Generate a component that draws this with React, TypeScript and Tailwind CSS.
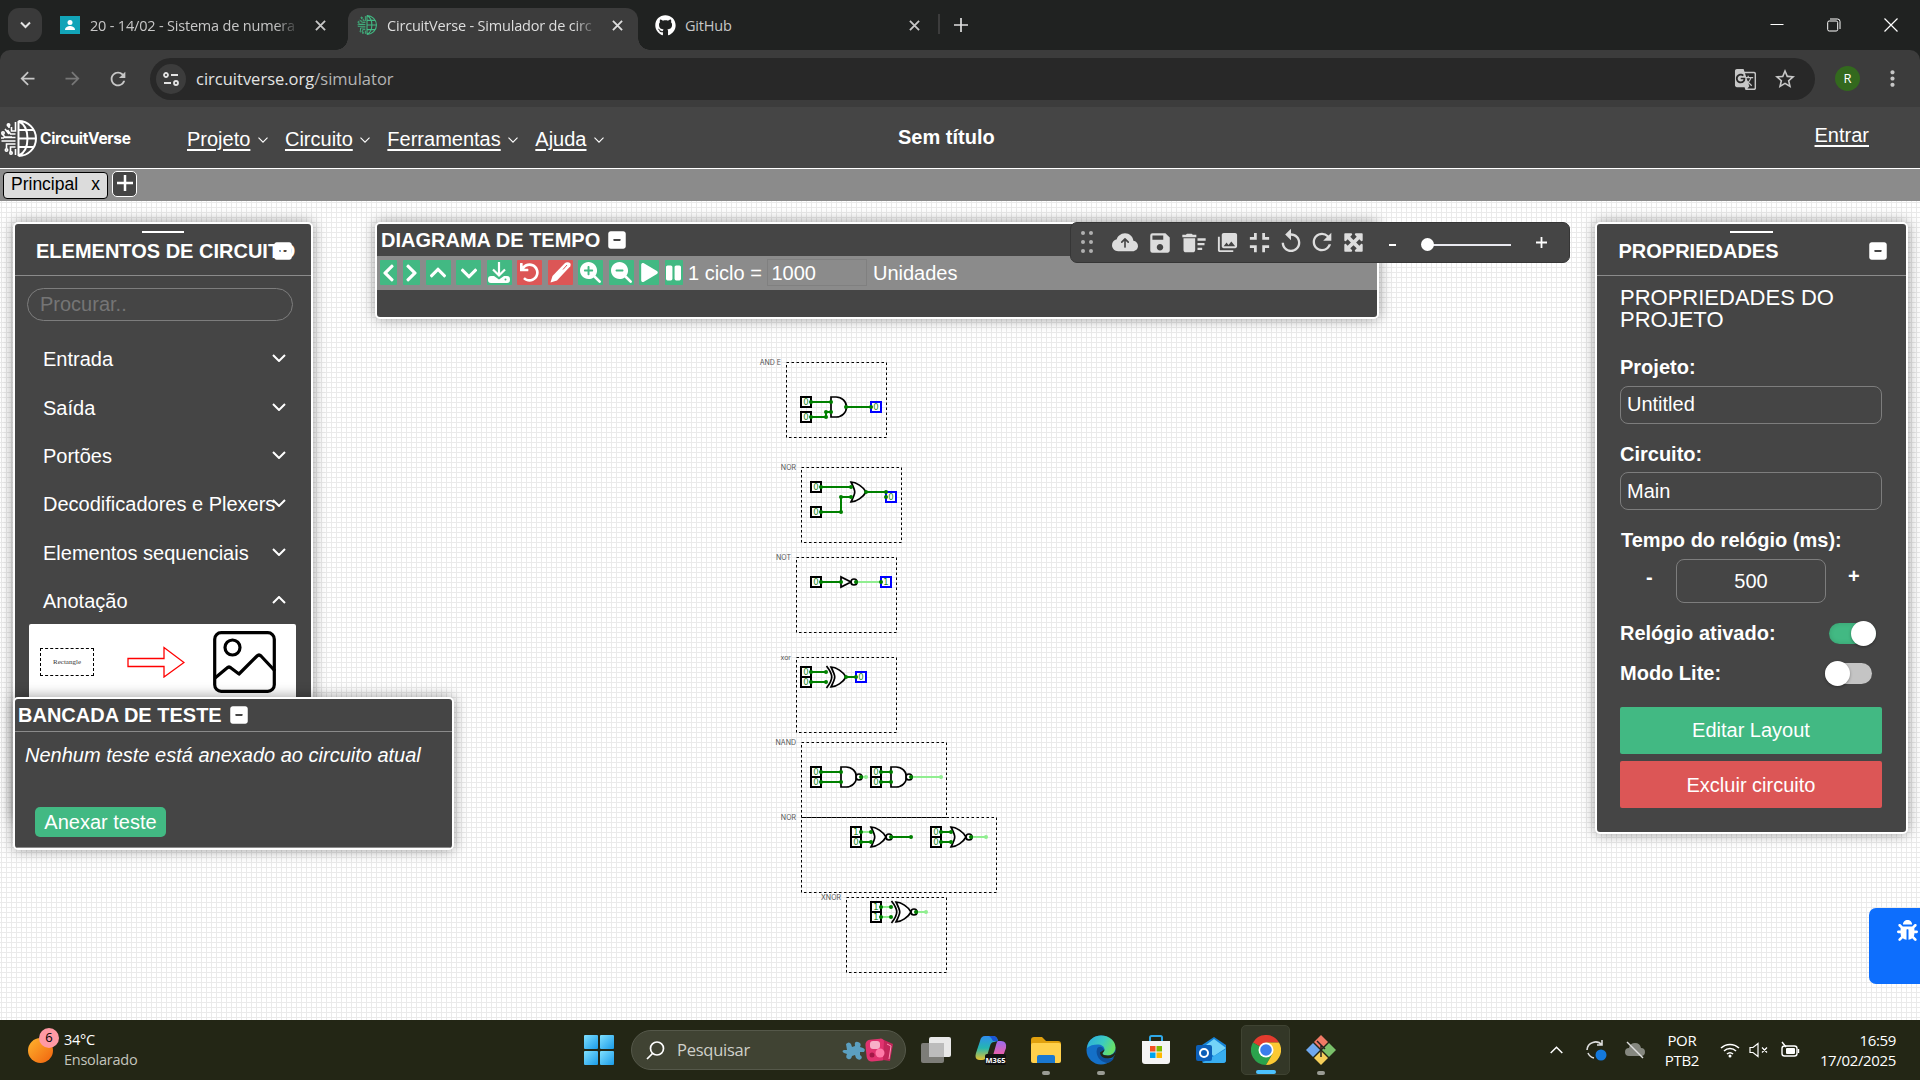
import React from "react";
import { FaGithub, FaPlay, FaPause, FaUndo, FaChevronLeft, FaChevronRight, FaChevronUp, FaChevronDown, FaBug } from "react-icons/fa";
import { FaSquareMinus, FaMaximize, FaMagnifyingGlassPlus, FaMagnifyingGlassMinus } from "react-icons/fa6";
import { BsCloudArrowUpFill } from "react-icons/bs";
import { MdSave, MdDeleteSweep, MdPhotoLibrary, MdFullscreenExit, MdReplay, MdRefresh, MdStarBorder, MdGTranslate, MdMoreVert, MdArrowBack, MdArrowForward } from "react-icons/md";

const ARIAL = "font-['Liberation_Sans',Arial,sans-serif]";
const SEGOE = "font-['Open_Sans',sans-serif]";
const PANEL =
  "absolute rounded-[5px] border-2 border-white bg-[#454545] text-white shadow-[0_0_14px_rgba(0,0,0,0.4)] overflow-hidden";

/* ---------- Browser chrome ---------- */

function TabClose({ className = "" }: { className?: string }) {
  return (
    <svg className={`h-[11px] w-[11px] shrink-0 ${className}`} viewBox="0 0 12 12" fill="none" stroke="currentColor" strokeWidth="2">
      <path d="M1 1l10 10M11 1L1 11" />
    </svg>
  );
}

function GlobeMark({ color, className }: { color: string; className: string }) {
  return (
    <svg className={className} viewBox="0 0 37 37" fill="none" stroke={color} strokeWidth="1.6">
      <path d="M18.500 1v35M18.500 1a17.500 17.500 0 0 1 0 35M18.500 1c6 3 9 10 9 17.500s-3 14.500-9 17.500M18.500 10h15M18.500 18.500h17.500M18.500 27h15" strokeWidth="2" />
      <path d="M15.500 2v9h-4v-4M12 17h-7l-3-3M15.500 14h-5l-3-4M15.500 17.500h-12M15.500 21h-14M15.500 24h-9v4M15.500 27h-5v5M15.500 35v-6M9 4v4M5 9l4 5M1 18h3" />
      <circle cx="8.500" cy="5" r="1.200" />
      <circle cx="3" cy="13" r="1.200" />
      <circle cx="6.500" cy="30" r="1.200" />
      <circle cx="11" cy="33" r="1.200" />
    </svg>
  );
}

function TabStrip() {
  return (
    <div className="flex h-[50px] bg-[#202221] text-[#c7c7c7]">
      <div className="mt-[8px] ml-[8px] flex h-[34px] w-[34px] items-center justify-center rounded-[11px] bg-[#3a3a3a]">
        <svg className="h-[8px] w-[11px]" viewBox="0 0 11 8" fill="none" stroke="#e3e3e3" strokeWidth="2">
          <path d="M1 1.500l4.500 4.500L10 1.500" />
        </svg>
      </div>
      <div className="ml-[18px] flex w-[288px] items-center">
        <span className="flex h-[18px] w-[20px] items-center justify-center bg-[#12a4b8]">
          <svg className="h-[12px] w-[12px]" viewBox="0 0 12 12" fill="#fff">
            <circle cx="6" cy="3.500" r="2.500" />
            <path d="M1 11c0-3 3-4 5-4s5 1 5 4z" />
          </svg>
        </span>
        <span className="mt-[1px] ml-[10px] w-[210px] text-[14.500px] tracking-[-0.190px] whitespace-nowrap [mask-image:linear-gradient(90deg,#000_88%,transparent)]">
          20 - 14/02 - Sistema de numera
        </span>
        <TabClose className="ml-[15px]" />
      </div>
      <div className="relative mt-[8px] flex h-[42px] w-[290px] items-center rounded-t-[12px] bg-[#3c3c3c] pb-[8px] pl-[9px] text-[#dedede]">
        <span className="absolute bottom-0 left-[-12px] h-[12px] w-[12px] bg-[radial-gradient(circle_at_0_0,transparent_11.500px,#3c3c3c_12px)]" />
        <span className="absolute right-[-12px] bottom-0 h-[12px] w-[12px] bg-[radial-gradient(circle_at_100%_0,transparent_11.500px,#3c3c3c_12px)]" />
        <GlobeMark color="#42b983" className="h-[20px] w-[20px]" />
        <span className="mt-[1px] ml-[10px] w-[212px] text-[14.500px] tracking-[-0.190px] whitespace-nowrap [mask-image:linear-gradient(90deg,#000_88%,transparent)]">
          CircuitVerse - Simulador de circ
        </span>
        <TabClose className="ml-[13px]" />
      </div>
      <div className="ml-[17px] flex w-[265px] items-center">
        <FaGithub className="h-[21px] w-[21px] text-white" />
        <span className="mt-[1px] ml-[9px] w-[225px] text-[14.500px] tracking-[-0.190px]">GitHub</span>
        <TabClose />
      </div>
      <div className="mt-[14px] ml-[18px] h-[20px] w-[2px] bg-[#3c3c3c]" />
      <svg className="mt-[18px] ml-[14px] h-[14px] w-[14px]" viewBox="0 0 14 14" stroke="#dedede" strokeWidth="1.700">
        <path d="M7 0v14M0 7h14" />
      </svg>
      <div className="mr-[22px] ml-auto flex items-center gap-[43px] pb-[1px]">
        <svg className="h-[14px] w-[14px]" viewBox="0 0 14 14" stroke="#fff">
          <path d="M0.500 6.500h13" />
        </svg>
        <svg className="h-[14px] w-[14px]" viewBox="0 0 14 14" fill="none" stroke="#fff">
          <rect x="0.700" y="3" width="10" height="10" rx="1.500" />
          <path d="M3 1h7.500a2.500 2.500 0 0 1 2.500 2.500V11" />
        </svg>
        <svg className="h-[14px] w-[14px]" viewBox="0 0 14 14" stroke="#fff" strokeWidth="1.200">
          <path d="M0.500 0.500l13 13M13.500 0.500l-13 13" />
        </svg>
      </div>
    </div>
  );
}

function AddressBar() {
  return (
    <div className="bg-[#202221]">
      <div className="flex h-[57px] items-center rounded-t-[10px] bg-[#3c3c3c] text-[#c7c7c7]">
        <MdArrowBack className="ml-[17px] h-[21px] w-[21px]" />
        <MdArrowForward className="ml-[24px] h-[21px] w-[21px] text-[#777]" />
        <MdRefresh className="ml-[24px] h-[22px] w-[22px]" />
        <div className="mt-[1px] ml-[21px] flex h-[42px] w-[1665px] items-center rounded-full bg-[#282828] pl-[6px]">
          <span className="flex h-[30px] w-[30px] items-center justify-center rounded-full bg-[#3c3c3c]">
            <svg className="h-[14px] w-[16px]" viewBox="0 0 16 14" fill="none" stroke="#e3e3e3" strokeWidth="1.800">
              <circle cx="3" cy="3" r="2" />
              <path d="M8 3h7M1 11h7" />
              <circle cx="13" cy="11" r="2" />
            </svg>
          </span>
          <span className="mt-[1px] ml-[10px] text-[16.500px] tracking-[0px] text-[#e3e3e3]">
            circuitverse.org<span className="text-[#b5b5b5]">/simulator</span>
          </span>
          <MdGTranslate className="ml-auto h-[23px] w-[23px]" />
          <MdStarBorder className="mr-[18px] ml-[16px] h-[24px] w-[24px]" />
        </div>
        <span className="ml-[20px] flex h-[25px] w-[25px] items-center justify-center rounded-full bg-[#33691e] text-[13px] text-white">R</span>
        <MdMoreVert className="ml-[20px] h-[25px] w-[25px]" />
      </div>
    </div>
  );
}

/* ---------- Simulator navigation ---------- */

function MenuItem({ label }: { label: string }) {
  return (
    <span className="flex items-center">
      <span className="underline decoration-[1.500px] underline-offset-[2.500px]">{label}</span>
      <svg className="mt-[2px] ml-[7.500px] h-[6px] w-[10px]" viewBox="0 0 10 6" fill="none" stroke="#fff" strokeWidth="1.100">
        <path d="M0.500 0.700L5 5.200L9.500 0.700" />
      </svg>
    </span>
  );
}

function NavBar() {
  return (
    <nav className={`relative flex h-[62px] items-start border-b border-white bg-[#454545] text-[20px] leading-[24px] text-white ${ARIAL}`}>
      <div className="flex w-[187px] items-center pt-[13px]">
        <GlobeMark color="#fff" className="h-[37px] w-[37px]" />
        <span className="ml-[3px] font-['Inter',sans-serif] text-[15.500px] font-bold tracking-[-0.300px]">CircuitVerse</span>
      </div>
      <div className="flex gap-[17.100px] pt-[20px]">
        <MenuItem label="Projeto" />
        <MenuItem label="Circuito" />
        <MenuItem label="Ferramentas" />
        <MenuItem label="Ajuda" />
      </div>
      <span className="absolute top-[18px] left-[898px] font-bold">Sem título</span>
      <span className="mt-[16px] mr-[51px] ml-auto underline decoration-[1.500px] underline-offset-[2.500px]">Entrar</span>
    </nav>
  );
}

function CircuitTabs() {
  return (
    <div className={`flex h-[32px] bg-[#8b8b8b] ${ARIAL}`}>
      <div className="mt-[3px] ml-[3px] flex h-[27px] w-[105px] justify-between rounded-[4px] border border-black bg-[#dcdcdc] pr-[7px] pl-[7px] text-[17.500px] leading-[23px] text-black">
        <span>Principal</span>
        <span>x</span>
      </div>
      <div className="mt-[2px] ml-[4px] flex h-[26px] w-[25px] items-center justify-center rounded-[5px] border border-white bg-[#454545]">
        <svg className="mb-[3px] h-[16px] w-[16px]" viewBox="0 0 16 16" stroke="#fff" strokeWidth="2.500">
          <path d="M8 0v16M0 8h16" />
        </svg>
      </div>
    </div>
  );
}

/* ---------- Circuit drawing ---------- */

const GREEN = "#008000";
const LIGHT = "#90ee90";

function Frame({ x, y, w, label }: { x: number; y: number; w: number; label: string }) {
  return (
    <g>
      <rect x={x + 0.5} y={y + 0.5} width={w} height={75} fill="none" stroke="#000" strokeDasharray="2.5 2.5" />
      <text x={x - 5} y={y + 3} textAnchor="end" fontSize="7" fill="#555" fontFamily="Inter, sans-serif">
        {label}
      </text>
    </g>
  );
}

function Pin({ x, y, v, out = false }: { x: number; y: number; v: number; out?: boolean }) {
  return (
    <g>
      <rect x={x - 5} y={y - 5} width={10} height={10} fill="#fff" stroke={out ? "#0000ff" : "#000"} strokeWidth="2" />
      <text x={x} y={y + 3.100} textAnchor="middle" fontSize="8.500" fill="#1f8c1f" fontFamily="DejaVu Sans, sans-serif">
        {v}
      </text>
    </g>
  );
}

function Wire({ d, light = false }: { d: string; light?: boolean }) {
  return <path d={d} fill="none" stroke={light ? LIGHT : GREEN} strokeWidth="2" />;
}

function Dots({ at, light = false }: { at: number[][]; light?: boolean }) {
  return (
    <>
      {at.map(([x, y]) => (
        <circle key={`${x}-${y}`} cx={x} cy={y} r="2" fill={light ? LIGHT : GREEN} />
      ))}
    </>
  );
}

function And({ x, y }: { x: number; y: number }) {
  return <path transform={`translate(${x} ${y})`} d="M-5 -10h5a10.500 10 0 0 1 0 20h-5z" fill="#fff" stroke="#000" strokeWidth="1.700" />;
}

function Or({ x, y, x2 = false }: { x: number; y: number; x2?: boolean }) {
  return (
    <g transform={`translate(${x} ${y})`} stroke="#000" strokeWidth="1.700">
      <path d="M-5 -10C0 -10 7.500 -5 10 0C7.500 5 0 10 -5 10C0 0 0 0 -5 -10z" fill="#fff" />
      {x2 && <path d="M-9.500 -11C-2.500 -2 -2.500 2 -9.500 11" fill="none" />}
    </g>
  );
}

function Bubble({ x, y }: { x: number; y: number }) {
  return <circle cx={x} cy={y} r="3" fill="#fff" stroke="#000" strokeWidth="1.700" />;
}

function Circuit() {
  return (
    <svg className="block h-full w-full" viewBox="0 201 1920 819">
      <defs>
        <pattern id="grid" x="1" y="2" width="5" height="5" patternUnits="userSpaceOnUse">
          <path d="M0 0.500h5M0.500 0v5" stroke="#eaeaea" strokeWidth="1" />
        </pattern>
      </defs>
      <rect y="201" width="1920" height="819" fill="#fff" />
      <rect y="201" width="1920" height="819" fill="url(#grid)" />

      <Frame x={786} y={362} w={100} label="AND E" />
      <Frame x={801} y={467} w={100} label="NOR" />
      <Frame x={796} y={557} w={100} label="NOT" />
      <Frame x={796} y={657} w={100} label="xor" />
      <Frame x={801} y={742} w={145} label="NAND" />
      <Frame x={801} y={817} w={195} label="NOR" />
      <Frame x={846} y={897} w={100} label="XNOR" />

      <Wire d="M811 402h20M811 417h15v-5h5M846 407h25" />
      <Pin x={806} y={402} v={0} />
      <Pin x={806} y={417} v={0} />
      <Pin x={876} y={407} v={0} out />
      <And x={836} y={407} />
      <Dots at={[[811, 402], [831, 402], [811, 417], [826, 417], [826, 412], [831, 412], [846, 407], [871, 407]]} />

      <Wire d="M821 487h30M821 512h20v-15h10M866 492h20v5" />
      <Pin x={816} y={487} v={0} />
      <Pin x={816} y={512} v={0} />
      <Pin x={891} y={497} v={0} out />
      <Or x={856} y={492} />
      <Dots at={[[821, 487], [851, 487], [821, 512], [841, 512], [841, 497], [851, 497], [866, 492], [886, 492], [886, 497]]} />

      <Wire d="M821 582h20" />
      <Wire d="M856 582h25" light />
      <Pin x={816} y={582} v={0} />
      <Pin x={886} y={582} v={1} out />
      <path d="M841 577v10l10 -5z" fill="#fff" stroke="#000" strokeWidth="1.700" />
      <Bubble x={854} y={582} />
      <Dots at={[[821, 582], [841, 582], [856, 582], [881, 582]]} />

      <Wire d="M811 672h15M811 682h15M846 677h10" />
      <Pin x={806} y={672} v={0} />
      <Pin x={806} y={682} v={0} />
      <Pin x={861} y={677} v={0} out />
      <Or x={836} y={677} x2 />
      <Dots at={[[811, 672], [826, 672], [811, 682], [826, 682], [846, 677], [856, 677]]} />

      <Wire d="M821 772h20M821 782h20M881 772h10M881 782h10" />
      <Wire d="M861 777h5M911 777h30" light />
      <Pin x={816} y={772} v={0} />
      <Pin x={816} y={782} v={0} />
      <Pin x={876} y={772} v={0} />
      <Pin x={876} y={782} v={0} />
      <And x={846} y={777} />
      <And x={896} y={777} />
      <Bubble x={859} y={777} />
      <Bubble x={909} y={777} />
      <Dots at={[[821, 772], [841, 772], [821, 782], [841, 782], [861, 777], [881, 772], [891, 772], [881, 782], [891, 782], [911, 777]]} />
      <Dots at={[[866, 777], [941, 777]]} light />

      <Wire d="M861 832h10M971 837h15" light />
      <Wire d="M861 842h10M891 837h20M941 832h10M941 842h10" />
      <Pin x={856} y={832} v={1} />
      <Pin x={856} y={842} v={0} />
      <Pin x={936} y={832} v={0} />
      <Pin x={936} y={842} v={0} />
      <Or x={876} y={837} />
      <Or x={956} y={837} />
      <Bubble x={889} y={837} />
      <Bubble x={969} y={837} />
      <Dots at={[[861, 832], [871, 832], [861, 842], [871, 842], [891, 837], [911, 837], [941, 832], [951, 832], [941, 842], [951, 842], [971, 837]]} />
      <Dots at={[[986, 837]]} light />

      <Wire d="M881 907h10M881 917h10M916 912h10" light />
      <Pin x={876} y={907} v={1} />
      <Pin x={876} y={917} v={1} />
      <Or x={901} y={912} x2 />
      <Bubble x={914} y={912} />
      <Dots at={[[881, 907], [891, 907], [881, 917], [891, 917], [916, 912]]} />
      <Dots at={[[926, 912]]} light />
    </svg>
  );
}

/* ---------- Floating panels ---------- */

function Angle({ up = false }: { up?: boolean }) {
  return (
    <svg className={up ? "h-[8px] w-[14px] rotate-180" : "h-[8px] w-[14px]"} viewBox="0 0 14 8" fill="none" stroke="#fff" strokeWidth="2">
      <path d="M1 1l6 6l6 -6" />
    </svg>
  );
}

function ElementsPanel() {
  const groups = ["Entrada", "Saída", "Portões", "Decodificadores e Plexers", "Elementos sequenciais", "Anotação"];
  return (
    <section className={`${PANEL} top-[21px] left-[13px] h-[600px] w-[300px]`}>
      <div className="relative flex h-[52px] items-center border-b border-[#8b8b8b] pt-[3px] pl-[21px] text-[20px] font-bold whitespace-nowrap">
        <span className="absolute top-[7px] left-[127px] h-[2px] w-[42px] bg-white" />
        ELEMENTOS DE CIRCUITO
        <FaSquareMinus className="absolute top-[17px] left-[259px] h-[20px] w-[18px]" />
      </div>
      <div className="mx-[12px] mt-[12px] flex h-[33px] w-[266px] items-center rounded-full border border-[#7d7d7d] pb-[1px] pl-[12px] text-[20px] text-[#757575]">
        Procurar..
      </div>
      <div className="mt-[14px] text-[20px]">
        {groups.map((g) => (
          <div key={g} className="relative flex h-[48.400px] items-center pl-[28px] whitespace-nowrap">
            {g}
            <span className="absolute right-[25.500px] mb-[2px]">
              <Angle up={g === "Anotação"} />
            </span>
          </div>
        ))}
      </div>
      <div className="mt-[-1px] ml-[14px] flex h-[80px] w-[267px] items-start rounded-t-[2px] bg-white">
        <div className="mt-[24px] ml-[11px] flex h-[28px] w-[54px] items-center justify-center border border-dashed border-black font-['Liberation_Serif',serif] text-[7px] text-[#333]">
          Rectangle
        </div>
        <svg className="mt-[22px] ml-[33px] h-[32px] w-[58px]" viewBox="0 0 58 32" fill="none" stroke="#f00" strokeWidth="1.300">
          <path d="M1 12.500h36V1.500L57 16.500L37 31V20.500H1z" />
        </svg>
        <svg className="mt-[7px] ml-[28px] h-[62px] w-[63px]" viewBox="0 0 63 62" fill="none" stroke="#000" strokeWidth="3.200">
          <rect x="1.700" y="1.700" width="59.600" height="58.600" rx="6.500" />
          <circle cx="19.500" cy="16.500" r="7.500" />
          <path d="M2 47l12-10q2-2 4 0l8 6l18-18q2-2 4 0l14 15" strokeLinejoin="round" />
        </svg>
      </div>
    </section>
  );
}

function TestPanel() {
  return (
    <section className={`${PANEL} top-[496px] left-[13px] h-[153px] w-[441px]`}>
      <div className="flex h-[33px] items-center gap-[8px] border-b border-[#8b8b8b] pb-[1px] pl-[3px] text-[20px] font-bold">
        BANCADA DE TESTE
        <FaSquareMinus className="h-[20px] w-[18px]" />
      </div>
      <div className="mt-[11px] ml-[10px] text-[20px] leading-[24px] italic">Nenhum teste está anexado ao circuito atual</div>
      <div className="mt-[40px] ml-[20px] flex h-[30px] w-[131px] items-center justify-center rounded-[5px] bg-[#42b983] text-[20px]">Anexar teste</div>
      <div className="mt-[10px] h-px bg-[#8b8b8b]" />
    </section>
  );
}

function TimingButton({ w, red = false, children }: { w: string; red?: boolean; children: React.ReactNode }) {
  return <span className={`flex h-[25px] shrink-0 items-center justify-center rounded-[1px] ${w} ${red ? "bg-[#dc5656]" : "bg-[#42b983]"}`}>{children}</span>;
}

function TimingPanel() {
  return (
    <section className={`${PANEL} top-[21px] left-[375px] h-[97px] w-[1004px]`}>
      <div className="flex h-[32px] items-center gap-[8px] pb-[1px] pl-[4px] text-[20px] font-bold">
        DIAGRAMA DE TEMPO
        <FaSquareMinus className="h-[20px] w-[18px]" />
      </div>
      <div className="flex h-[34px] items-center gap-[5.500px] bg-[#8b8b8b] pb-[1px] pl-[2.500px] text-[20px]">
        <TimingButton w="w-[17.500px]"><FaChevronLeft className="h-[20px] w-[13px]" /></TimingButton>
        <TimingButton w="w-[17.500px]"><FaChevronRight className="h-[20px] w-[13px]" /></TimingButton>
        <TimingButton w="w-[25px]"><FaChevronUp className="h-[19px] w-[20px]" /></TimingButton>
        <TimingButton w="w-[25px]"><FaChevronDown className="mt-[2px] h-[19px] w-[20px]" /></TimingButton>
        <TimingButton w="w-[25px]">
          <svg className="h-[21px] w-[22px]" viewBox="0 0 22 21" fill="none" stroke="#fff" strokeWidth="2.200">
            <path d="M11 0v13M5 7.500l6 6l6-6" />
            <path d="M0 17q0-3 3-3h3l5 3.500l5-3.500h3q3 0 3 3v1q0 3-3 3H3q-3 0-3-3z" fill="#fff" stroke="none" />
            <circle cx="17.500" cy="17.500" r="1" fill="#42b983" stroke="none" />
          </svg>
        </TimingButton>
        <TimingButton w="w-[25px]" red><FaUndo className="h-[19px] w-[19px]" /></TimingButton>
        <TimingButton w="w-[25px]" red>
          <svg className="h-[21px] w-[21px]" viewBox="0 0 21 21">
            <path d="M0.500 20.500l2-6.500L14.500 1.500q2-1.800 4.500-1t1.300 3.700L7 18.500z" fill="#fff" />
            <path d="M13 7.500l4-4.500" stroke="#dc5656" strokeWidth="1" />
          </svg>
        </TimingButton>
        <TimingButton w="w-[25px]"><FaMagnifyingGlassPlus className="h-[21px] w-[21px]" /></TimingButton>
        <TimingButton w="w-[25px]"><FaMagnifyingGlassMinus className="h-[21px] w-[21px]" /></TimingButton>
        <TimingButton w="w-[20px]"><FaPlay className="h-[19px] w-[17px]" /></TimingButton>
        <TimingButton w="w-[18px]">
          <FaPause className="h-[18px] w-[15px]" />
        </TimingButton>
        <span className="whitespace-nowrap">1 ciclo =</span>
        <span className="flex h-[27px] w-[100px] items-center border border-[#808080] pl-[3px]">1000</span>
        <span>Unidades</span>
      </div>
    </section>
  );
}

function QuickToolbar() {
  return (
    <div className="absolute top-[21px] left-[1070px] flex h-[41px] w-[500px] items-center rounded-[7px] border border-[#363636] bg-[#454545] text-[#dddddd]">
      <div className="mb-[2px] ml-[10px] grid w-[12px] grid-cols-2 gap-x-[3px] gap-y-[5px]">
        {[0, 1, 2, 3, 4, 5].map((i) => (
          <span key={i} className="h-[4px] w-[4px] rounded-full bg-[#b0b0b0]" />
        ))}
      </div>
      <BsCloudArrowUpFill className="ml-[19px] h-[26px] w-[26px]" />
      <MdSave className="ml-[9px] h-[26px] w-[26px]" />
      <MdDeleteSweep className="ml-[7px] h-[30px] w-[28px]" />
      <MdPhotoLibrary className="ml-[8px] h-[23px] w-[23px]" />
      <MdFullscreenExit className="ml-[4px] h-[33px] w-[33px]" />
      <MdReplay className="mb-[2px] ml-[1px] h-[29px] w-[28px]" />
      <MdRefresh className="mb-[1px] ml-[3px] h-[28px] w-[28px]" />
      <FaMaximize className="mb-[1px] ml-[7px] h-[21px] w-[21px]" />
      <span className="mt-[4px] ml-[25px] h-[2px] w-[7px] bg-white" />
      <span className="relative mt-[5px] ml-[27px] h-[2px] w-[88px] bg-[#e9e9ef]">
        <span className="absolute top-[-6px] left-[-2px] h-[13px] w-[13px] rounded-full bg-white" />
      </span>
      <svg className="ml-[25px] h-[11px] w-[11px]" viewBox="0 0 11 11" stroke="#fff" strokeWidth="1.800">
        <path d="M5.500 0v11M0 5.500h11" />
      </svg>
    </div>
  );
}

function Toggle({ on }: { on: boolean }) {
  return (
    <span className="flex h-[25px] w-[51px] items-center">
      <span
        className={
          on
            ? "ml-[4px] flex h-[21px] w-[47px] items-center justify-end rounded-full bg-[#42b983] shadow-[inset_0_0_5px_rgba(0,0,0,0.15)]"
            : "flex h-[21px] w-[47px] items-center rounded-full bg-[#c4c4c4]"
        }
      >
        <span className="h-[25px] w-[25px] shrink-0 rounded-full bg-white shadow-[0_1px_3px_rgba(0,0,0,0.35)]" />
      </span>
    </span>
  );
}

function PropertiesPanel() {
  return (
    <section className={`${PANEL} top-[21px] left-[1595px] h-[612px] w-[313px] text-[20px] leading-[24px]`}>
      <div className="relative flex h-[52px] items-center justify-between border-b border-[#8b8b8b] pt-[3px] pr-[19px] pl-[21.500px] font-bold">
        <span className="absolute top-[7px] left-[133px] h-[2px] w-[43px] bg-white" />
        PROPRIEDADES
        <FaSquareMinus className="h-[20px] w-[18px]" />
      </div>
      <div className="flex flex-col pr-[24px] pl-[23px]">
        <h2 className="mt-[11px] text-[22px] leading-[22px]">PROPRIEDADES DO PROJETO</h2>
        <label className="mt-[24px] font-bold">Projeto:</label>
        <span className="mt-[7px] flex h-[38px] items-center rounded-[8px] border border-[#7d7d7d] pb-[2px] pl-[6px]">Untitled</span>
        <label className="mt-[18px] font-bold">Circuito:</label>
        <span className="mt-[6px] flex h-[38px] items-center rounded-[8px] border border-[#7d7d7d] pb-[1px] pl-[6px]">Main</span>
        <label className="mt-[18px] pl-[1px] font-bold">Tempo do relógio (ms):</label>
        <div className="mt-[7px] flex h-[44px] items-start font-bold">
          <span className="mt-[6px] ml-[26px] w-[30px]">-</span>
          <span className="flex h-[44px] w-[150px] items-center justify-center rounded-[8px] border border-[#7d7d7d] font-normal">500</span>
          <span className="mt-[5px] ml-[22px]">+</span>
        </div>
        <div className="mt-[18px] flex h-[25px] items-center justify-between pr-[6px] font-bold">
          <span className="mb-[1px]">Relógio ativado:</span>
          <Toggle on />
        </div>
        <div className="mt-[15px] flex h-[25px] items-center justify-between pr-[6px] font-bold">
          <span className="mb-[1px]">Modo Lite:</span>
          <Toggle on={false} />
        </div>
        <div className="mt-[21px] flex h-[47px] items-center justify-center rounded-[2px] bg-[#42b983] pb-[1px]">Editar Layout</div>
        <div className="mt-[7px] flex h-[47px] items-center justify-center rounded-[2px] bg-[#dc5656]">Excluir circuito</div>
      </div>
    </section>
  );
}

/* ---------- Windows taskbar ---------- */

function TaskIcon({ active = false, running = false, children }: { active?: boolean; running?: boolean; children: React.ReactNode }) {
  return (
    <span className={`relative flex h-[50px] w-[49px] items-center justify-center rounded-[5px] ${active ? "border border-[#3f4332] bg-[#333727]" : ""}`}>
      {children}
      {(active || running) && (
        <span className={`absolute bottom-0 left-1/2 h-[4px] -translate-x-1/2 rounded-full ${active ? "w-[20px] bg-[#4cc2ff]" : "w-[8px] bg-[#9a9c94]"}`} />
      )}
    </span>
  );
}

function Taskbar() {
  return (
    <footer className={`relative flex h-[60px] items-center bg-[#232615] text-white ${SEGOE}`}>
      <div className="relative ml-[28px] flex h-[60px] w-[545px] items-center">
        <span className="h-[25px] w-[25px] rounded-full bg-[linear-gradient(135deg,#ffb52e,#f0620e)]" />
        <span className="absolute top-[8px] left-[11px] flex h-[20px] w-[20px] items-center justify-center rounded-full bg-[#ff99a4] text-[13px] text-black">6</span>
        <span className="ml-[11px] flex flex-col text-[14.500px] leading-[20px] tracking-[-0.250px]">
          <span>34°C</span>
          <span className="text-[#c4c5bd]">Ensolarado</span>
        </span>
      </div>
      <span className="ml-[11px] grid h-[30px] w-[30px] grid-cols-2 gap-[1.500px]">
        {[0, 1, 2, 3].map((i) => (
          <span key={i} className="rounded-[1px] bg-[linear-gradient(135deg,#7fe0ff,#1a9be8)]" />
        ))}
      </span>
      <div className="ml-[17px] flex h-[40px] w-[275px] items-center rounded-full border border-[#55584a] bg-[#404333] pl-[14px]">
        <svg className="h-[19px] w-[19px]" viewBox="0 0 19 19" fill="none" stroke="#fff" strokeWidth="1.700">
          <circle cx="11" cy="7.500" r="6.500" />
          <path d="M6.500 12.500L1 18" />
        </svg>
        <span className="ml-[12px] text-[16.500px] tracking-[-0.250px] text-[#cfd0ca]">Pesquisar</span>
        <svg className="mr-[8px] ml-auto h-[30px] w-[56px]" viewBox="0 0 56 30">
          <path
            d="M5 9q3-3 5 0l1 3 3-1q-1-5 3-4t2 5l3 1q3 1 1 4l-4 0 0 3q3 2 1 4t-5-1l-1-3-3 1q-1 4-4 3t-1-5l-3-1q-3-2 0-3l3 0z"
            fill="#5b9fc0"
          />
          <rect x="25" y="4" width="20" height="22" rx="5" fill="#e0336f" transform="rotate(-6 36 15)" />
          <path d="M43 5l9 4-3 17-7-1z" fill="#c2265a" />
          <path d="M46 9l4 2-2 13" fill="none" stroke="#ff8fb5" strokeWidth="1" />
          <rect x="29" y="6" width="10" height="8" rx="3" fill="#f8b0c8" />
          <circle cx="39" cy="18" r="4.500" fill="#ff7aa8" />
          <circle cx="31" cy="20" r="2.500" fill="#a31847" />
        </svg>
      </div>
      <div className="ml-[5px] flex items-center gap-[6px]">
        <TaskIcon>
          <svg className="h-[28px] w-[30px]" viewBox="0 0 30 28">
            <rect x="8" y="1" width="22" height="20" rx="2" fill="#e8e8e8" />
            <rect x="0" y="7" width="23" height="20" rx="2" fill="#7d7d78" />
            <rect x="8" y="7" width="15" height="14" fill="#bcbcbc" />
          </svg>
        </TaskIcon>
        <TaskIcon>
          <svg className="h-[30px] w-[32px]" viewBox="0 0 32 30">
            <defs>
              <linearGradient id="copilotLeft" x1="0" y1="0" x2="0" y2="1">
                <stop offset="0" stopColor="#2f8df0" />
                <stop offset="0.500" stopColor="#25b6b0" />
                <stop offset="1" stopColor="#e8c22c" />
              </linearGradient>
              <linearGradient id="copilotRight" x1="0" y1="0" x2="0" y2="1">
                <stop offset="0" stopColor="#9a6cf0" />
                <stop offset="0.600" stopColor="#ec5fa6" />
                <stop offset="1" stopColor="#f58a4b" />
              </linearGradient>
            </defs>
            <path d="M10 1h8q4 0 5 5l-4 1q-3 0-4 4l-3 10q-1 4-5 4H5q-6 0-4-7L5 6q1-5 5-5z" fill="url(#copilotLeft)" />
            <path d="M23 6h3q6 0 5 7l-4 11q-1 5-5 5h-9q3-1 4-5l4-14q1-4 2-4z" fill="url(#copilotRight)" />
            <path d="M14 1h4q4 0 5 5l-5 0q-2-4-4-5z" fill="#1a56d6" />
            <rect x="10" y="19" width="21" height="11" rx="2" fill="#111" />
            <text x="20.500" y="27.500" textAnchor="middle" fontSize="7.500" fontWeight="bold" fill="#fff" fontFamily="Open Sans, sans-serif">M365</text>
          </svg>
        </TaskIcon>
        <TaskIcon running>
          <svg className="h-[28px] w-[30px]" viewBox="0 0 30 28">
            <path d="M0 4q0-3 3-3h8l4 4h12q3 0 3 3v4H0z" fill="#e0a00e" />
            <rect x="0" y="7" width="30" height="20" rx="2" fill="#ffd04c" />
            <path d="M6 27v-6q0-2 2-2h14q2 0 2 2v6z" fill="#1a78d0" />
          </svg>
        </TaskIcon>
        <TaskIcon running>
          <svg className="h-[30px] w-[30px]" viewBox="0 0 30 30">
            <defs>
              <linearGradient id="edgeTop" x1="0" y1="0" x2="1" y2="0.400">
                <stop offset="0" stopColor="#2aa9e0" />
                <stop offset="0.600" stopColor="#3ccbc0" />
                <stop offset="1" stopColor="#66e06a" />
              </linearGradient>
            </defs>
            <circle cx="15" cy="15" r="14.500" fill="#1470c8" />
            <path d="M1 13C2 4 9 .500 15 .500c9 0 14.500 6 14.500 12 0 5-4 8-8 8-3 0-5-1-5-2 0-1 2-1.500 2-4 0-3-3-5-7-5-4 0-8 1-10.500 3.500z" fill="url(#edgeTop)" />
            <path d="M11 14c-2 6 3 13 10 14 3 0 6-3 7-5-3 2-9 1-12-3-1-2 0-4 2-5-1-4-6-4-7-1z" fill="#0e4f9a" />
            <path d="M18.500 14.500c0 2-2 3-2 4 0 1 2 2 5 2 4 0 7-2 8-5l-.500 4q-2 4-7 4c-5 0-8-3-8-6z" fill="#232615" />
          </svg>
        </TaskIcon>
        <TaskIcon>
          <svg className="h-[30px] w-[30px]" viewBox="0 0 30 30">
            <path d="M9 8V2.500q0-1.500 1.500-1.500h9q1.500 0 1.500 1.500V8" fill="none" stroke="#2fa8e8" strokeWidth="2" />
            <path d="M1 6h28v20q0 3-3 3H4q-3 0-3-3z" fill="#f4f4f4" />
            <path d="M9 11h5.500v5.500H9z" fill="#f25022" />
            <path d="M15.500 11H21v5.500h-5.500z" fill="#7fba00" />
            <path d="M9 17.500h5.500V23H9z" fill="#00a4ef" />
            <path d="M15.500 17.500H21V23h-5.500z" fill="#ffb900" />
          </svg>
        </TaskIcon>
        <TaskIcon>
          <svg className="h-[28px] w-[30px]" viewBox="0 0 30 28">
            <path d="M6 9L18 1l12 8v15q0 3-3 3H9q-3 0-3-3z" fill="#1583d8" />
            <path d="M6 12l12-9 12 9-12 8z" fill="#74d3f8" />
            <path d="M6 27l24-14v11q0 3-3 3z" fill="#38aef0" />
            <rect x="0" y="9" width="16" height="16" rx="2" fill="#0c5fb8" />
            <circle cx="8" cy="17" r="4" fill="none" stroke="#fff" strokeWidth="2" />
          </svg>
        </TaskIcon>
        <TaskIcon active>
          <svg className="h-[30px] w-[30px]" viewBox="0 0 30 30">
            <path d="M15 15L2 7.500A15 15 0 0 1 28 7.500L15 7.500z" fill="#e33b2e" />
            <path d="M15 15L2 7.500A15 15 0 0 0 15 30L21.500 18.800z" fill="#2ba24c" />
            <path d="M15 7.500H28A15 15 0 0 1 15 30L21.500 18.800z" fill="#fcc934" />
            <circle cx="15" cy="15" r="7.500" fill="#fff" />
            <circle cx="15" cy="15" r="5.800" fill="#3b7ded" />
          </svg>
        </TaskIcon>
        <TaskIcon running>
          <svg className="h-[30px] w-[30px]" viewBox="0 0 30 30">
            <path d="M15 0l7 7-7 7-7-7z" fill="#f07a66" />
            <path d="M7 8l7 7-7 7-7-7z" fill="#6fa8ee" />
            <path d="M23 8l7 7-7 7-7-7z" fill="#7ac06a" />
            <path d="M15 16l7 7-7 7-7-7z" fill="#f5cf5a" />
            <path d="M11 6l8 8M15 10v12" stroke="#222" strokeWidth="1.500" />
          </svg>
        </TaskIcon>
      </div>
      <div className="mr-[24px] ml-auto flex items-center text-[15px] leading-[20px] tracking-[-0.350px]">
        <svg className="h-[8px] w-[13px]" viewBox="0 0 13 8" fill="none" stroke="#fff" strokeWidth="1.500">
          <path d="M0.700 7L6.500 1.200L12.300 7" />
        </svg>
        <svg className="ml-[22px] h-[22px] w-[22px]" viewBox="0 0 22 22" fill="none" stroke="#ddd" strokeWidth="1.600">
          <path d="M2 11a8.500 8.500 0 0 1 15-5M17 1v5h-5M9 19a8.500 8.500 0 0 1-6-5" />
          <circle cx="16" cy="16" r="5.500" fill="#1479dd" stroke="none" />
        </svg>
        <svg className="ml-[17px] h-[18px] w-[22px]" viewBox="0 0 22 18">
          <path d="M5 15q-4 0-4-4t4-4q1-5 6-5t6 5q4 0 4 4t-4 4z" fill="#85877f" />
          <path d="M3 1l16 16" stroke="#ddd" strokeWidth="1.400" />
        </svg>
        <span className="ml-[19px] flex w-[34px] flex-col items-center">
          <span>POR</span>
          <span>PTB2</span>
        </span>
        <svg className="ml-[21px] h-[16px] w-[20px]" viewBox="0 0 20 16" fill="none" stroke="#fff" strokeWidth="1.500">
          <path d="M1 6a13 13 0 0 1 18 0M4 9a8.500 8.500 0 0 1 12 0M7 12a4.500 4.500 0 0 1 6 0" />
          <circle cx="10" cy="14" r="1.500" fill="#fff" stroke="none" />
        </svg>
        <svg className="ml-[9px] h-[16px] w-[20px]" viewBox="0 0 20 16" fill="none" stroke="#fff" strokeWidth="1.200">
          <path d="M1 5.500h3l5-4v13l-5-4H1zM13 5.500l5 5M18 5.500l-5 5" />
        </svg>
        <svg className="ml-[11px] h-[18px] w-[20px]" viewBox="0 0 20 18" fill="none" stroke="#fff" strokeWidth="1.400">
          <rect x="2" y="5" width="15" height="10" rx="2.500" />
          <path d="M18.500 8v4M2 1l4 5" />
          <rect x="6" y="7" width="9" height="6" rx="1" fill="#fff" stroke="none" />
        </svg>
        <span className="ml-[20px] flex flex-col items-end">
          <span>16:59</span>
          <span>17/02/2025</span>
        </span>
      </div>
    </footer>
  );
}

export default function App() {
  return (
    <div className="flex h-[1080px] w-[1920px] flex-col overflow-hidden">
      <header className={SEGOE}>
        <TabStrip />
        <AddressBar />
      </header>
      <NavBar />
      <CircuitTabs />
      <main className={`relative h-[819px] overflow-hidden ${ARIAL}`}>
        <Circuit />
        <ElementsPanel />
        <TestPanel />
        <TimingPanel />
        <QuickToolbar />
        <PropertiesPanel />
        <div className="absolute top-[707px] left-[1869px] h-[76px] w-[51px] rounded-l-[7px] bg-[#0d6efd] pt-[12px] pl-[28px] text-white">
          <FaBug className="h-[21px] w-[21px]" />
        </div>
      </main>
      <Taskbar />
    </div>
  );
}
